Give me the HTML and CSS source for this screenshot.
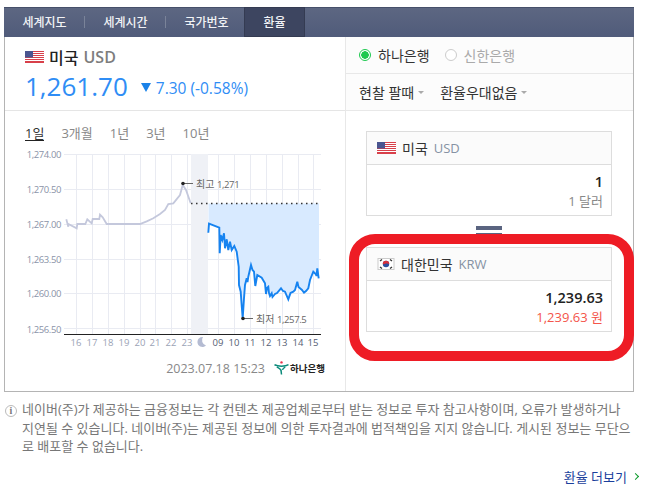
FILE: index.html
```html
<!DOCTYPE html>
<html lang="ko">
<head>
    <meta charset="UTF-8">
    <title>환율</title>
    <link rel="stylesheet" href="styles.css">
</head>
<body>
<svg class="defs" width="0" height="0">
    <symbol id="flagUs" viewBox="0 0 19 12">
        <rect width="19" height="12" fill="#fff"/>
        <path d="M0 .5h19M0 2.5h19M0 4.5h19M0 6.5h19M0 8.5h19M0 10.5h19" stroke="#d8404a" stroke-width="1"/>
        <rect y="11" width="19" height="1" fill="#d8404a"/>
        <rect width="8" height="6.5" fill="#4a5590"/>
    </symbol>
    <symbol id="flagKr" viewBox="0 0 17 12">
        <rect x=".5" y=".5" width="16" height="11" fill="#fff" stroke="#ccc"/>
        <path d="M2.5 3l2-1.5M2.5 9l2 1.5M14.500 3l-2-1.500M14.500 9l-2 1.500" stroke="#333" stroke-width="1.300"/>
        <circle cx="8.500" cy="6" r="3.200" fill="#2a4f9e"/>
        <path d="M5.300 6a3.200 3.200 0 0 1 6.400 0c-1 0-1.600-.9-3.200-.5S6.300 6.800 5.300 6z" fill="#d8303a"/>
    </symbol>
</svg>

<div class="board">
    <ul class="tabs">
        <li>세계지도</li>
        <li>세계시간</li>
        <li>국가번호</li>
        <li class="on">환율</li>
    </ul>

    <div class="main">
        <div class="left">
            <div class="summary">
                <div class="country">
                    <svg class="flag"><use href="#flagUs"/></svg>
                    <b>미국</b> <span class="code">USD</span>
                </div>
                <div class="rate">
                    <span class="now">1,261.70</span>
                    <span class="down"></span>
                    <span class="diff">7.30 (-0.58%)</span>
                </div>
            </div>

            <div class="periods">
                <span class="on">1일</span>
                <span>3개월</span>
                <span>1년</span>
                <span>3년</span>
                <span>10년</span>
            </div>

            <svg class="chart" viewBox="5 148 340 206" width="340" height="206">
                <g class="grid">
                    <path d="M64 154.500H321M64 189.500H321M64 224.500H321M64 259.500H321M64 293.500H321M64 328.500H321"/>
                    <path d="M76.500 154V334M92.500 154V334M108.500 154V334M124.500 154V334M140.500 154V334M155.500 154V334M171.500 154V334M187.500 154V334M218.500 154V334M234.500 154V334M250.500 154V334M266.500 154V334M282.500 154V334M298.500 154V334M313.500 154V334"/>
                </g>
                <rect class="night" x="191" y="154" width="17" height="180"/>

                <g class="ylabels">
                    <text x="61" y="158">1,274.00</text>
                    <text x="61" y="193">1,270.50</text>
                    <text x="61" y="228">1,267.00</text>
                    <text x="61" y="263">1,263.50</text>
                    <text x="61" y="297">1,260.00</text>
                    <text x="61" y="333">1,256.50</text>
                </g>

                <polygon class="area" points="208.500,203.500 319,203.500 319,278.300 318.700,278.300 317.300,268.300 315.700,274 313.300,271.700 310,280 308.300,288.300 304,292.700 300,288.300 297.300,281.700 293.300,291.700 288.300,299.300 285,291.700 281,288.300 275,294 271.700,293.300 270,296 268.300,286.700 266,294 265,283.300 261.700,277.700 257.300,275 255.300,286 254,271.700 251,265 248.300,276.700 246.700,278.300 245,285 244,298.300 242.700,318.300 240.700,291.700 239,285 238.700,266.700 236.700,251.700 234.300,246 231.700,250 230,241.700 228.300,250 226.700,239.300 225,248.300 224,233.300 222.300,240 220.700,235 219.700,253.300 219.300,227.700 209,223.700 208.500,232.700"/>
                <path class="dots" d="M191 203.500H321"/>
                <polyline class="past" points="66.300,219.300 68.300,226.700 68.300,224 76.700,228.300 77.300,224 85.300,224 87.300,219.300 91.700,223.300 92.700,219 99.300,219 100,214.700 102.700,217.300 106.700,224 140,224 146.700,221.300 153.300,218.300 160,214 165,210 168.300,204 173.300,203.300 180,195 182.700,185 186,190 190.700,203.300"/>
                <polyline class="today" points="208.300,232.700 209,223.700 219.300,227.700 219.700,253.300 220.700,235 222.300,240 224,233.300 225,248.300 226.700,239.300 228.300,250 230,241.700 231.700,250 234.300,246 236.700,251.700 238.700,266.700 239,285 240.700,291.700 241.500,303 242.700,318.300 244,298.300 245,285 246.700,278.300 247.500,282 248.300,276.700 251,265 252.500,270 254,271.700 255.300,286 257.300,275 261.700,277.700 265,283.300 266,294 267,288 268.300,286.700 269,293 270,296 271.700,293.300 272.500,297 275,294 277,293 281,288.300 283,291 285,291.700 288.300,299.300 290.500,293 293.300,291.700 295,290 297.300,281.700 298.500,287 300,288.300 302,290 304,292.700 306,291 308.300,288.300 310,280 313.300,271.700 315.700,274 316.500,276 317.300,268.300 318.700,278.300"/>

                <path class="mark-line" d="M183 183.500H193M243 318.500H253"/>
                <circle class="mark" cx="183" cy="183.500" r="1.800"/>
                <circle class="mark" cx="243" cy="318.500" r="1.800"/>
                <text class="mark-text" x="196" y="188">최고 <tspan class="small">1,271</tspan></text>
                <text class="mark-text" x="256" y="323">최저 <tspan class="small">1,257.5</tspan></text>

                <path class="axis" d="M64 334.500H321"/>
                <g class="xlabels">
                    <text x="76" y="346">16</text>
                    <text x="92" y="346">17</text>
                    <text x="108" y="346">18</text>
                    <text x="124" y="346">19</text>
                    <text x="140" y="346">20</text>
                    <text x="155" y="346">21</text>
                    <text x="171" y="346">22</text>
                    <text x="187" y="346">23</text>
                </g>
                <path class="moon" d="M203 337a5 5 0 1 0 3 8.500a5.500 5.500 0 0 1-3-8.500z"/>
                <g class="xlabels today-labels">
                    <text x="218" y="346">09</text>
                    <text x="234" y="346">10</text>
                    <text x="250" y="346">11</text>
                    <text x="266" y="346">12</text>
                    <text x="282" y="346">13</text>
                    <text x="298" y="346">14</text>
                    <text x="313" y="346">15</text>
                </g>
            </svg>

            <div class="stamp">
                <span class="date">2023.07.18 15:23</span>
                <span class="bank">
                    <svg class="bank-logo" viewBox="0 0 16 15" width="15" height="14">
                        <circle cx="8" cy="1.500" r="1.300" fill="#e8304a"/>
                        <path d="M.5 4c3 1.500 5 1.500 7.500 1.500S13 5.500 15.500 4M3 6.500c2 1 3.500 1.500 4.500 3.500l.5 4.500M12 6.500c-1.500.7-2.500 1.500-3 3" fill="none" stroke="#0a8a7a" stroke-width="1.600"/>
                    </svg>
                    하나은행
                </span>
            </div>
        </div>

        <div class="right">
            <div class="option banks">
                <span class="radio on"></span><span class="bank-name">하나은행</span>
                <span class="radio"></span><span class="bank-name off">신한은행</span>
            </div>
            <div class="option selects">
                <span class="select">현찰 팔때<i></i></span>
                <span class="select">환율우대없음<i></i></span>
            </div>

            <div class="converter">
                <div class="calc">
                    <div class="calc-head">
                        <svg class="flag"><use href="#flagUs"/></svg>
                        미국 <span class="code">USD</span>
                    </div>
                    <div class="calc-body">
                        <strong>1</strong>
                        <span>1 달러</span>
                    </div>
                </div>

                <div class="equal"></div>

                <div class="calc">
                    <div class="calc-head">
                        <svg class="flag kr"><use href="#flagKr"/></svg>
                        대한민국 <span class="code">KRW</span>
                    </div>
                    <div class="calc-body">
                        <strong>1,239.63</strong>
                        <span class="won">1,239.63 원</span>
                    </div>
                </div>

                <div class="highlight"></div>
            </div>
        </div>
    </div>
</div>

<div class="notice">
    <span class="info">i</span>
    <p>네이버(주)가 제공하는 금융정보는 각 컨텐츠 제공업체로부터 받는 정보로 투자 참고사항이며, 오류가 발생하거나<br>
    지연될 수 있습니다. 네이버(주)는 제공된 정보에 의한 투자결과에 법적책임을 지지 않습니다. 게시된 정보는 무단으<br>
    로 배포할 수 없습니다.</p>
</div>

<div class="more"><a href="#">환율 더보기</a><i></i></div>
</body>
</html>
```

FILE: styles.css
```css
html, body {
    margin: 0;
    padding: 0;
    height: 498px;
    overflow: hidden;
}

body {
    font-family: "Open Sans", "Noto Sans CJK KR", sans-serif;
    font-size: 13px;
    color: #333;
    background-color: #fff;
    padding-top: 7px;
    box-sizing: border-box;
}

.defs {
    display: block;
    height: 0;
}

.board {
    width: 628px;
    margin-left: 4px;
    border: 1px solid #b4b4b4;
    border-top: none;
}

.tabs {
    display: flex;
    height: 30px;
    margin: 0 -1px;
    padding: 0;
    list-style: none;
    background: linear-gradient(#5d6782, #505b7a);
    box-shadow: inset 0 1px 0 #46506a;
}

.tabs li {
    display: flex;
    align-items: center;
    justify-content: center;
    width: 81px;
    box-sizing: border-box;
    font-size: 12px;
    font-weight: 500;
    color: #f2f3f6;
    background: linear-gradient(#7a8399, #7a8399) right center / 1px 12px no-repeat;
}

.tabs li.on {
    width: 61px;
    margin-left: -3px;
    background: #3d4560;
    border: 1px solid #343b52;
}

.tabs li:nth-child(3) {
    background: none;
}

.main {
    display: flex;
    height: 354px;
}

.left {
    width: 340px;
    border-right: 1px solid #e8e8e8;
}

.summary {
    height: 74px;
    padding: 10px 0 0 20px;
    box-sizing: border-box;
    border-bottom: 1px solid #e5e5e5;
}

.country {
    display: flex;
    align-items: center;
    gap: 5px;
    height: 20px;
    font-size: 16px;
}

.country b {
    font-weight: 500;
    color: #222;
}

.country .code {
    font-size: 16px;
    font-weight: 600;
    color: #7d7d7d;
}

.flag {
    width: 19px;
    height: 12px;
}

.rate {
    display: flex;
    align-items: center;
    height: 36px;
    margin-top: 1px;
    color: #2f8df5;
}

.now {
    font-size: 26px;
}

.down {
    width: 0;
    height: 0;
    margin: 3px 5px 0 13px;
    border-left: 5px solid transparent;
    border-right: 5px solid transparent;
    border-top: 9px solid #1a82e8;
}

.diff {
    margin-top: 4px;
    font-size: 15.500px;
}

.periods {
    display: flex;
    gap: 17px;
    height: 37px;
    padding: 12px 0 0 20px;
    box-sizing: border-box;
    font-size: 13px;
    color: #888;
}

.periods .on {
    height: 17px;
    color: #333;
    border-bottom: 1px solid #222;
}

.chart {
    display: block;
    font-family: "Open Sans", "Noto Sans CJK KR", sans-serif;
}

.grid path {
    fill: none;
    stroke: #e9ebf2;
    stroke-width: 1;
}

.night {
    fill: #eff1f6;
}

.ylabels text {
    font-size: 9.500px;
    letter-spacing: -0.4px;
    text-anchor: end;
    fill: #8a93a8;
}

.area {
    fill: #d8eaff;
}

.dots {
    fill: none;
    stroke: #333;
    stroke-width: 1.500;
    stroke-dasharray: 1.500 3.500;
}

.past {
    fill: none;
    stroke: #c4c8dc;
    stroke-width: 1.800;
}

.today {
    fill: none;
    stroke: #1683f0;
    stroke-width: 1.900;
}

.mark-line {
    stroke: #666;
    stroke-width: 1;
}

.mark {
    fill: #222;
}

.mark-text {
    font-size: 10px;
    fill: #666;
}

.small {
    font-size: 9.500px;
    letter-spacing: -0.4px;
}

.axis {
    stroke: #222;
    stroke-width: 1;
}

.xlabels text {
    font-size: 9.500px;
    text-anchor: middle;
    fill: #9aa2b5;
}

.xlabels.today-labels text {
    fill: #555e73;
}

.moon {
    fill: #b4bbd2;
}

.stamp {
    display: flex;
    align-items: center;
    justify-content: flex-end;
    gap: 9px;
    height: 28px;
    padding-right: 20px;
}

.date {
    font-size: 12.500px;
    color: #888;
}

.bank {
    display: flex;
    align-items: center;
    gap: 1px;
    font-size: 9.500px;
    font-weight: 700;
    color: #222;
}

.right {
    flex: 1;
    min-width: 0;
}

.option {
    display: flex;
    align-items: center;
    height: 37px;
    box-sizing: border-box;
    padding-left: 13px;
    border-bottom: 1px solid #e8e8e8;
    background-color: #fcfcfc;
    font-size: 14px;
}

.radio {
    width: 12px;
    height: 12px;
    box-sizing: border-box;
    border: 1px solid #ccc;
    border-radius: 50%;
    background-color: #fff;
}

.radio.on {
    border-color: #1ec94f;
    background: radial-gradient(circle, #1ec94f 0 3.500px, #fff 4px);
}

.bank-name {
    margin: 0 15px 0 7px;
    color: #333;
}

.bank-name.off {
    color: #aaa;
}

.selects {
    gap: 16px;
}

.select {
    display: flex;
    align-items: center;
    gap: 4px;
}

.select i {
    width: 0;
    height: 0;
    border-left: 3px solid transparent;
    border-right: 3px solid transparent;
    border-top: 3px solid #aaa;
}

.converter {
    position: relative;
    padding: 20px 21px 0 20px;
}

.calc {
    height: 85px;
    box-sizing: border-box;
    border: 1px solid #ddd;
}

.calc-head {
    display: flex;
    align-items: center;
    gap: 6px;
    height: 32px;
    padding-left: 10px;
    background-color: #fbfbfb;
    border-bottom: 1px solid #ddd;
    font-size: 14px;
    color: #333;
}

.calc-head .code {
    color: #8592a3;
    font-size: 13px;
}

.flag.kr {
    width: 18px;
}

.calc-body {
    display: flex;
    flex-direction: column;
    align-items: flex-end;
    padding: 7px 8px 0 0;
}

.calc-body strong {
    height: 20px;
    font-size: 14.500px;
    font-weight: 600;
    color: #222;
    line-height: 20px;
}

.calc-body span {
    font-size: 13px;
    line-height: 18px;
    color: #888;
}

.calc-body .won {
    color: #f4554a;
}

.equal {
    width: 26px;
    height: 31px;
    margin: 0 auto;
    padding-top: 10px;
    box-sizing: border-box;
}

.equal::before,
.equal::after {
    content: "";
    display: block;
    background-color: #5a6480;
}

.equal::before {
    height: 4px;
}

.equal::after {
    height: 2px;
    margin-top: 3px;
}

.highlight {
    position: absolute;
    left: 3px;
    top: 123px;
    width: 285px;
    height: 127px;
    box-sizing: border-box;
    border: 10px solid #ee1c25;
    border-radius: 26px;
}

.notice {
    display: flex;
    margin: 8px 0 0 5px;
}

.info {
    flex: none;
    width: 12px;
    height: 12px;
    margin: 5px 5px 0 0;
    box-sizing: border-box;
    border: 1px solid #bbb;
    border-radius: 50%;
    font-family: "Liberation Serif", serif;
    font-size: 10px;
    font-weight: 700;
    line-height: 10px;
    text-align: center;
    color: #777;
}

.notice p {
    margin: 0;
    font-size: 13px;
    line-height: 18.500px;
    color: #777;
    white-space: nowrap;
}

.more {
    display: flex;
    align-items: center;
    justify-content: flex-end;
    gap: 6px;
    margin: 11px 7px 0 0;
    font-size: 13px;
}

.more a {
    color: #1a3f9c;
    text-decoration: none;
}

.more i {
    width: 4px;
    height: 4px;
    border-top: 1.500px solid #0a9a2a;
    border-right: 1.500px solid #0a9a2a;
    transform: rotate(45deg);
}
```
